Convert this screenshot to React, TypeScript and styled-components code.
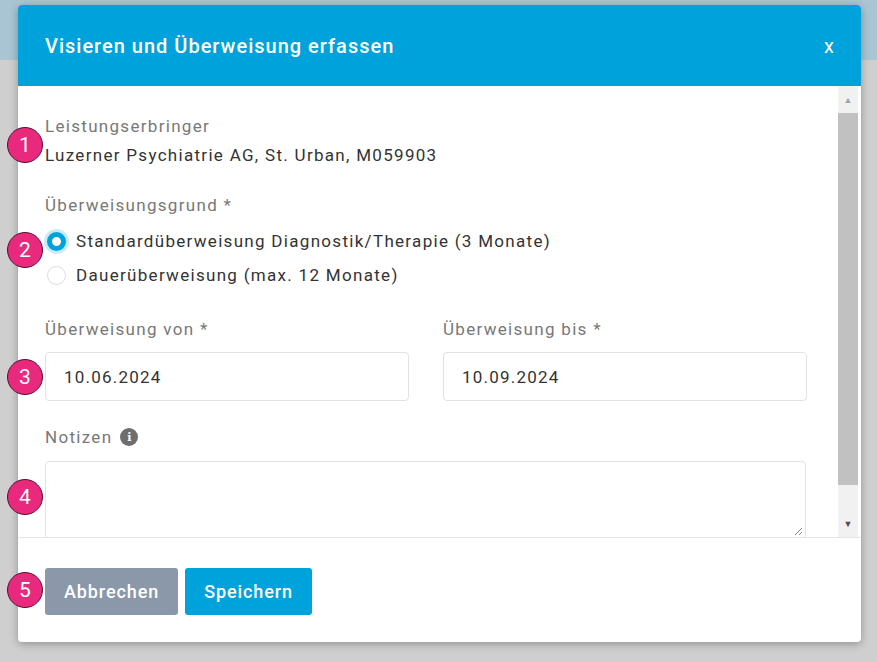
import React from 'react';
import styled, { createGlobalStyle } from 'styled-components';

const Global = createGlobalStyle`
  html, body { margin: 0; padding: 0; }
  body { width: 877px; height: 662px; overflow: hidden; background: #cfcfcf; font-family: Roboto, "Noto Sans", sans-serif; }
`;

const Page = styled.div`
  position: relative;
  width: 877px;
  height: 662px;
  background: linear-gradient(#a9c5d3 0, #a9c5d3 60px, #cfcfcf 60px);
  padding: 5px 0 0 18px;
  box-sizing: border-box;
`;

const Modal = styled.div`
  width: 843px;
  height: 637px;
  background: #fff;
  border-radius: 4px;
  box-shadow: 0 2px 8px rgba(0,0,0,0.3);
  display: flex;
  flex-direction: column;
  overflow: hidden;
`;

const Header = styled.div`
  height: 81px;
  background: #00a2dc;
  display: flex;
  align-items: center;
  justify-content: space-between;
  padding: 0 27px;
  color: #fff;
  flex-shrink: 0;
`;

const Title = styled.div`
  font-size: 20px;
  font-weight: 500;
  letter-spacing: 1px;
`;

const Close = styled.div`
  font-size: 20px;
`;

const BodyWrap = styled.div`
  height: 451px;
  display: flex;
  border-bottom: 1px solid #e4e4e4;
`;

const Body = styled.div`
  flex: 1;
  padding: 30px 32px 0 27px;
  display: flex;
  flex-direction: column;
  overflow: hidden;
`;

const Scrollbar = styled.div`
  width: 20px;
  margin-right: 3px;
  background: #f1f1f1;
  display: flex;
  flex-direction: column;
  align-items: center;
`;

const Arrow = styled.div<{ $dark?: boolean }>`
  height: 27px;
  font-size: 9px;
  color: ${p => (p.$dark ? '#505050' : '#a3a3a3')};
  display: flex;
  align-items: center;
  justify-content: center;
`;

const Thumb = styled.div`
  width: 20px;
  height: 372px;
  background: #c1c1c1;
`;

const Spacer = styled.div`
  flex: 1;
`;

const Label = styled.div`
  font-size: 17px;
  letter-spacing: 1.3px;
  color: #787878;
  height: 22px;
  display: flex;
  align-items: center;
  gap: 8px;
`;

const Value = styled.div`
  font-size: 17px;
  letter-spacing: 1.3px;
  color: #333;
  margin-top: 9px;
`;

const Section = styled.div<{ $gap?: number }>`
  margin-top: ${p => p.$gap ?? 0}px;
`;

const Radios = styled.div`
  margin-top: 8px;
`;

const RadioRow = styled.div`
  display: flex;
  align-items: center;
  gap: 10px;
  font-size: 17px;
  letter-spacing: 1.3px;
  color: #333;
  height: 34px;
`;

const Radio = styled.span<{ $on?: boolean }>`
  width: 19px;
  height: 19px;
  border-radius: 50%;
  box-sizing: border-box;
  margin-left: 2px;
  border: ${p => (p.$on ? '5px solid #00a2dc' : '1px solid #ddd')};
  background: #fff;
  box-shadow: ${p => (p.$on ? '0 0 0 3px #c9ebf7' : 'none')};
`;

const Row = styled.div`
  display: grid;
  grid-template-columns: 364px 364px;
  column-gap: 34px;
`;

const Input = styled.div`
  margin-top: 12px;
  height: 49px;
  border: 1px solid #e2e2e2;
  border-radius: 4px;
  box-sizing: border-box;
  display: flex;
  align-items: center;
  padding-left: 18px;
  font-size: 17px;
  letter-spacing: 1.2px;
  color: #333;
`;

const TextArea = styled.div`
  margin-top: 13px;
  height: 76px;
  border: 1px solid #e2e2e2;
  border-radius: 4px;
  position: relative;
`;

const Grip = styled.svg`
  position: absolute;
  right: 2px;
  bottom: 2px;
`;

const Info = styled.span`
  width: 18px;
  height: 18px;
  border-radius: 50%;
  background: #6e6e6e;
  color: #fff;
  font-size: 11px;
  font-weight: 700;
  letter-spacing: 0;
  font-family: "DejaVu Serif", serif;
  display: flex;
  align-items: center;
  justify-content: center;
`;

const Footer = styled.div`
  flex: 1;
  display: flex;
  align-items: center;
  gap: 7px;
  padding: 0 27px;
  padding-top: 2px;
`;

const Button = styled.div<{ $primary?: boolean }>`
  height: 47px;
  padding: 0 19px;
  border-radius: 3px;
  display: flex;
  align-items: center;
  font-size: 18px;
  font-weight: 500;
  letter-spacing: 0.9px;
  color: #fff;
  background: ${p => (p.$primary ? '#00a2dc' : '#8a98aa')};
`;

const Badge = styled.div<{ $top: number }>`
  position: absolute;
  left: 7px;
  top: ${p => p.$top}px;
  width: 34px;
  height: 34px;
  border-radius: 50%;
  background: #e8297d;
  border: 1px solid #5a1030;
  color: #fff;
  font-size: 21px;
  display: flex;
  align-items: center;
  justify-content: center;
`;

export default function App() {
  return (
    <Page>
      <Global />
      <Modal>
        <Header>
          <Title>Visieren und Überweisung erfassen</Title>
          <Close>x</Close>
        </Header>
        <BodyWrap>
          <Body>
            <Label>Leistungserbringer</Label>
            <Value>Luzerner Psychiatrie AG, St. Urban, M059903</Value>
            <Section $gap={29}>
              <Label>Überweisungsgrund *</Label>
              <Radios>
                <RadioRow><Radio $on />Standardüberweisung Diagnostik/Therapie (3 Monate)</RadioRow>
                <RadioRow><Radio />Dauerüberweisung (max. 12 Monate)</RadioRow>
              </Radios>
            </Section>
            <Section $gap={26}>
              <Row>
                <div>
                  <Label>Überweisung von *</Label>
                  <Input>10.06.2024</Input>
                </div>
                <div>
                  <Label>Überweisung bis *</Label>
                  <Input>10.09.2024</Input>
                </div>
              </Row>
            </Section>
            <Section $gap={25}>
              <Label>Notizen <Info>i</Info></Label>
              <TextArea>
                <Grip width="10" height="10" viewBox="0 0 10 10">
                  <path d="M9 2 L2 9 M9 6 L6 9" stroke="#888" strokeWidth="1" />
                </Grip>
              </TextArea>
            </Section>
          </Body>
          <Scrollbar>
            <Arrow>▲</Arrow>
            <Thumb />
            <Spacer />
            <Arrow $dark>▼</Arrow>
          </Scrollbar>
        </BodyWrap>
        <Footer>
          <Button>Abbrechen</Button>
          <Button $primary>Speichern</Button>
        </Footer>
      </Modal>
      <Badge $top={127}>1</Badge>
      <Badge $top={232}>2</Badge>
      <Badge $top={359}>3</Badge>
      <Badge $top={479}>4</Badge>
      <Badge $top={572}>5</Badge>
    </Page>
  );
}
